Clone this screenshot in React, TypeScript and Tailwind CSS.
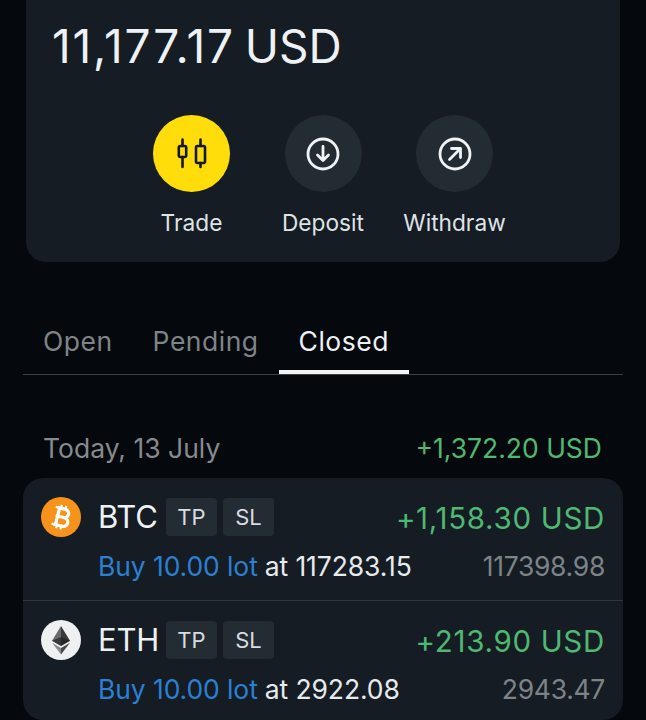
import React from "react";

const font = { fontFamily: "Inter, 'Liberation Sans', sans-serif" };

function Candles() {
  return (
    <svg width="34" height="34" viewBox="0 0 34 34" fill="none" stroke="#14181c" strokeWidth="2.6" strokeLinecap="round" strokeLinejoin="round">
      <path d="M7.5 2.5v6.5M7.5 20v10" />
      <rect x="3.8" y="9" width="7.4" height="11" rx="1.5" />
      <path d="M25.5 2.5v6.5M25.5 26v4" />
      <rect x="21" y="9" width="9" height="17" rx="1.5" />
    </svg>
  );
}

function DownIcon() {
  return (
    <svg width="36" height="36" viewBox="0 0 36 36" fill="none" stroke="#f1f4f7" strokeWidth="2.8" strokeLinecap="round" strokeLinejoin="round">
      <circle cx="18" cy="18" r="15" />
      <path d="M18 10.5v14M12.5 19l5.5 5.5 5.5-5.5" />
    </svg>
  );
}

function UpRightIcon() {
  return (
    <svg width="36" height="36" viewBox="0 0 36 36" fill="none" stroke="#f1f4f7" strokeWidth="2.8" strokeLinecap="round" strokeLinejoin="round">
      <circle cx="18" cy="18" r="15" />
      <path d="M12.5 23.5l10-10M14.5 12.5h9v9" />
    </svg>
  );
}

function BtcIcon() {
  return (
    <svg width="40" height="40" viewBox="0 0 40 40">
      <circle cx="20" cy="20" r="20" fill="#f7931a" />
      <g transform="rotate(14 20 20)" fill="none" stroke="#fff" strokeWidth="3.2" strokeLinejoin="round">
        <path d="M14.5 11.5h8a4.2 4.2 0 0 1 0 8.4h-8M14.5 19.9h9a4.4 4.4 0 0 1 0 8.8h-9M16.5 11.5v17.2" />
        <path d="M12.5 11.5h3M12.5 28.7h3M18 8v3.5M22.5 8v3.5M18 28.7v3.5M22.5 28.7v3.5" strokeWidth="2.2" />
      </g>
    </svg>
  );
}

function EthIcon() {
  return (
    <svg width="40" height="40" viewBox="0 0 40 40">
      <circle cx="20" cy="20" r="20" fill="#eef0f1" />
      <path d="M20 6L11 20.8 20 26z" fill="#6b6b6b" />
      <path d="M20 6L29 20.8 20 26z" fill="#3a3a3a" />
      <path d="M11 20.8L20 17l9 3.8L20 26z" fill="#1f1f1f" opacity="0.65" />
      <path d="M11 22.8L20 34.5V28z" fill="#8c8c8c" />
      <path d="M29 22.8L20 34.5V28z" fill="#4a4a4a" />
    </svg>
  );
}

function Action({ label, bg, children }: { label: string; bg: string; children: React.ReactNode }) {
  return (
    <div className="flex w-[131.5px] flex-col items-center">
      <div className={`flex h-[77px] w-[77px] items-center justify-center rounded-full ${bg}`}>{children}</div>
      <div className="mt-[15px] text-[22.7px] leading-[32px] text-[#dfe3e7]">{label}</div>
    </div>
  );
}

function Chip({ label }: { label: string }) {
  return (
    <div className="flex h-[38px] w-[51px] items-center justify-center rounded-[4px] bg-[#242c33] text-[22px] text-[#d9dde1]">
      {label}
    </div>
  );
}

function Row({
  icon,
  symbol,
  pnl,
  price,
  open,
  border,
}: {
  icon: React.ReactNode;
  symbol: string;
  pnl: string;
  price: string;
  open: string;
  border?: boolean;
}) {
  return (
    <div className={`flex px-[18px] ${border ? "h-[123px] border-b border-[#2f363c] pt-[19px]" : "h-[119px] pt-[19px]"}`}>
      <div className="w-[40px] shrink-0">{icon}</div>
      <div className="ml-[17px] flex-1">
        <div className="flex h-[40px] items-center">
          <span className="w-[68px] text-[31px] tracking-[-0.2px] text-[#eef1f4]">{symbol}</span>
          <div className="flex gap-[6px]">
            <Chip label="TP" />
            <Chip label="SL" />
          </div>
          <span className="ml-auto pt-[2px] text-[29.5px] leading-[44px] tracking-[0.7px] text-[#4fb872]">{pnl}</span>
        </div>
        <div className="mt-[10px] flex h-[40px] items-center text-[26.5px]">
          <span className="tracking-[-0.1px] text-[#2a80d2]">Buy 10.00 lot</span>
          <span className="ml-[7px] tracking-[-0.1px] text-[#e8ebee]">at {price}</span>
          <span className="ml-auto tracking-[-0.3px] text-[#7d8387]">{open}</span>
        </div>
      </div>
    </div>
  );
}

export default function App() {
  return (
    <div style={font} className="h-[720px] w-[646px] overflow-hidden bg-[#05080c]">
      <div className="mx-[26px] h-[262px] rounded-b-[20px] bg-[#151c23] pt-[16px]">
        <div className="pl-[26px] text-[46px] leading-[60px] text-[#eef1f5]">
          <span className="tracking-[1.8px]">11,177.17</span>
          <span className="ml-[-3px]"> USD</span>
        </div>
        <div className="mt-[39px] flex justify-center">
          <Action label="Trade" bg="bg-[#ffdd0a]">
            <Candles />
          </Action>
          <Action label="Deposit" bg="bg-[#242c33]">
            <DownIcon />
          </Action>
          <Action label="Withdraw" bg="bg-[#242c33]">
            <UpRightIcon />
          </Action>
        </div>
      </div>

      <div className="mx-[23px] mt-[59px] flex h-[54px] items-start border-b border-[#3b4045]">
        <div className="ml-[20px] text-[26.5px] leading-[41px] tracking-[0.5px] text-[#7e8488]">Open</div>
        <div className="ml-[40px] text-[26.5px] leading-[41px] tracking-[0.5px] text-[#7e8488]">Pending</div>
        <div className="relative ml-[40px] text-[26.5px] leading-[41px] tracking-[0.5px] text-[#eef1f4]">
          Closed
          <div className="absolute -left-[20px] -right-[20px] top-[49px] h-[4px] bg-[#f1f3f5]" />
        </div>
      </div>

      <div className="mx-[43px] mt-[54px] flex h-[40px] items-center text-[26.5px]">
        <span className="text-[#868b8f]">Today, 13 July</span>
        <span className="ml-auto mr-[1px] text-[#4fb872]">+1,372.20 USD</span>
      </div>

      <div className="mx-[23px] mt-[9px] rounded-[20px] bg-[#151c23]">
        <Row icon={<BtcIcon />} symbol="BTC" pnl="+1,158.30 USD" price="117283.15" open="117398.98" border />
        <Row icon={<EthIcon />} symbol="ETH" pnl="+213.90 USD" price="2922.08" open="2943.47" />
      </div>
    </div>
  );
}
